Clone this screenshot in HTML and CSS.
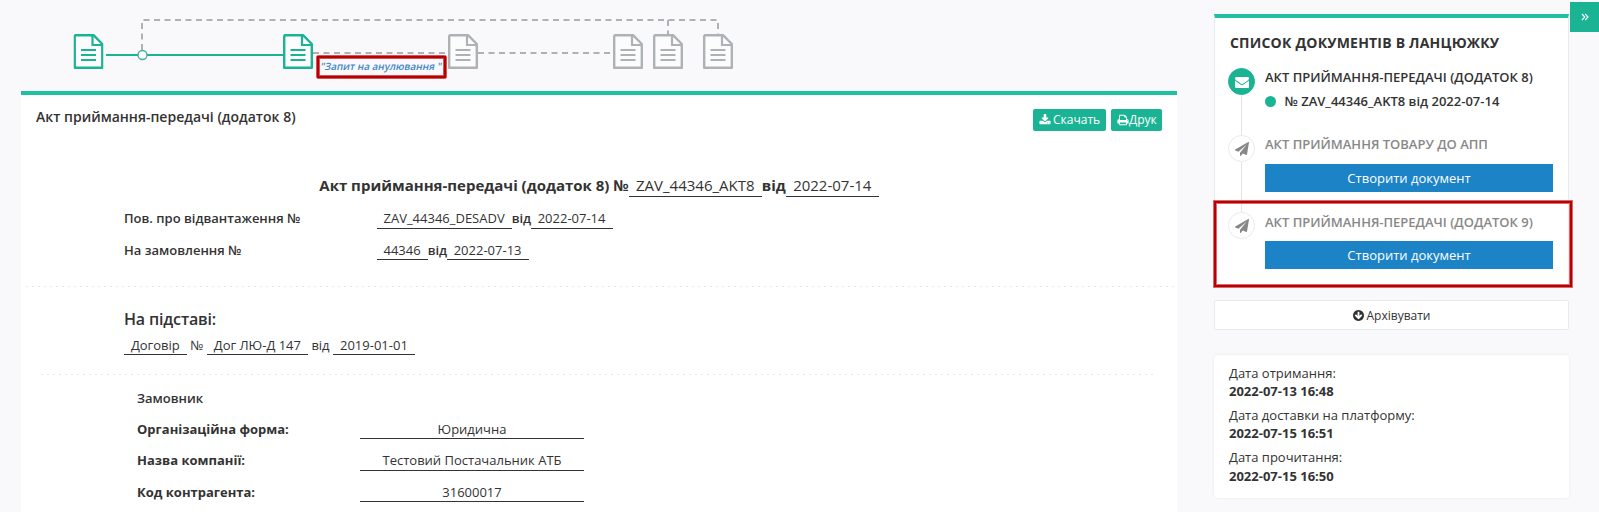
FILE: index.html
```html
<!DOCTYPE html>
<html lang="uk">
<head>
<meta charset="utf-8">
<title>Акт приймання-передачі</title>
<link rel="stylesheet" href="styles.css">
</head>
<body>
<svg width="0" height="0" class="defs">
  <symbol id="file" viewBox="0 0 30 35">
    <path d="M2 1.200H20L28.800 10V33.800H1.200V2Z" fill="#fff" fill-opacity=".55" stroke="currentColor" stroke-width="2.400" stroke-linejoin="round"/>
    <path d="M19 1V11H29" fill="none" stroke="currentColor" stroke-width="2.200"/>
    <path d="M7.500 16H22.500M7.500 21H22.500M7.500 26H22.500" stroke="currentColor" stroke-width="2"/>
  </symbol>
  <symbol id="plane" viewBox="0 0 1792 1792"><path fill="currentColor" d="M1764 11q33 24 27 64l-256 1536q-5 29-32 45-14 8-31 8-11 0-24-5l-453-185-242 295q-18 23-49 23-13 0-22-4-19-7-30.500-23.500t-11.500-36.500v-349l864-1059-1069 925-395-162q-37-14-40-55-2-40 32-59l1664-960q15-9 32-9 20 0 36 11z"/></symbol>
</svg>
<div class="app">
  <main class="main">
    <div class="chain">
      <svg class="chain-map" width="1156" height="91" viewBox="21 0 1156 91">
        <g fill="none" stroke="#aeb2b4" stroke-width="2" stroke-dasharray="6 4.500">
          <path d="M142 50V20H718V34"/>
          <path d="M668 20V34"/>
          <path d="M313 53H448M478 53H613"/>
        </g>
        <path d="M106 55H283" stroke="#1ab394" stroke-width="2"/>
        <circle cx="142.500" cy="55" r="4.500" fill="#fff" stroke="#3fae94" stroke-width="1.300"/>
        <g class="done">
          <use href="#file" x="73.500" y="34" width="30" height="35"/>
          <use href="#file" x="283" y="34" width="30" height="35"/>
        </g>
        <g class="pending">
          <use href="#file" x="448" y="34" width="30" height="35"/>
          <use href="#file" x="613" y="34" width="30" height="35"/>
          <use href="#file" x="653" y="34" width="30" height="35"/>
          <use href="#file" x="703" y="34" width="30" height="35"/>
        </g>
        <text class="chain-label" transform="translate(320 70) skewX(-12)" textLength="121" lengthAdjust="spacingAndGlyphs">"Запит на анулювання "</text>
        <rect x="318" y="57" width="127" height="20" rx="1" fill="none" stroke="#d9696f" stroke-width="4"/>
        <rect x="318" y="57" width="127" height="20" fill="none" stroke="#b80000" stroke-width="2.400"/>
      </svg>
    </div>
    <section class="panel">
      <header class="panel-head">
        <h1>Акт приймання-передачі (додаток 8)</h1>
        <div class="actions">
          <a class="btn btn-load"><svg width="12" height="12" viewBox="0 0 1792 1792"><path fill="currentColor" d="M1344 1344q0-26-19-45t-45-19-45 19-19 45 19 45 45 19 45-19 19-45zm256 0q0-26-19-45t-45-19-45 19-19 45 19 45 45 19 45-19 19-45zm128-224v320q0 40-28 68t-68 28h-1472q-40 0-68-28t-28-68v-320q0-40 28-68t68-28h465l135 136q58 56 136 56t136-56l136-136h464q40 0 68 28t28 68zm-325-569q17 41-14 70l-448 448q-18 19-45 19t-45-19l-448-448q-31-29-14-70 17-39 59-39h256v-448q0-26 19-45t45-19h256q26 0 45 19t19 45v448h256q42 0 59 39z"/></svg>Скачать</a>
          <a class="btn btn-print"><svg width="12" height="12" viewBox="0 0 1792 1792"><path fill="currentColor" d="M448 1536h896v-256h-896v256zm0-640h896v-384h-160q-40 0-68-28t-28-68v-160h-640v640zm1152 64q0-26-19-45t-45-19-45 19-19 45 19 45 45 19 45-19 19-45zm128 0v416q0 13-9.500 22.500t-22.500 9.500h-224v160q0 40-28 68t-68 28h-960q-40 0-68-28t-28-68v-160h-224q-13 0-22.500-9.500t-9.500-22.500v-416q0-79 56.500-135.500t135.500-56.500h64v-544q0-40 28-68t68-28h672q40 0 88 20t76 48l152 152q28 28 48 76t20 88v256h64q79 0 135.500 56.500t56.500 135.500z"/></svg>Друк</a>
        </div>
      </header>
      <h2 class="doc-title">Акт приймання-передачі (додаток 8) №<span class="val">ZAV_44346_AKT8</span>від<span class="val">2022-07-14</span></h2>
      <div class="ref-row"><b>Пов. про відвантаження №</b><span class="val">ZAV_44346_DESADV</span><b>від</b><span class="val">2022-07-14</span></div>
      <div class="ref-row second"><b>На замовлення №</b><span class="val">44346</span><b>від</b><span class="val">2022-07-13</span></div>
      <div class="rule"></div>
      <h3 class="basis">На підставі:</h3>
      <div class="basis-row"><span class="val">Договір</span><span>№</span><span class="val">Дог ЛЮ-Д 147</span><span>від</span><span class="val">2019-01-01</span></div>
      <div class="rule inner"></div>
      <div class="party">
        <div class="party-title">Замовник</div>
        <div class="field"><b>Організаційна форма:</b><span>Юридична</span></div>
        <div class="field tall"><b>Назва компанії:</b><span>Тестовий Постачальник АТБ</span></div>
        <div class="field"><b>Код контрагента:</b><span>31600017</span></div>
      </div>
    </section>
  </main>
  <aside class="side">
    <section class="docs">
      <h2>СПИСОК ДОКУМЕНТІВ В ЛАНЦЮЖКУ</h2>
      <div class="step first">
        <span class="dot on"><svg width="14" height="14" viewBox="0 0 1792 1792"><path fill="currentColor" d="M1792 710v794q0 66-47 113t-113 47h-1472q-66 0-113-47t-47-113v-794q44 49 101 87 362 246 497 345 57 42 92.500 65.500t94.500 48 110 24.500h2q51 0 110-24.500t94.500-48 92.500-65.500q170-123 498-345 57-39 100-87zm0-294q0 79-49 151t-122 123q-376 261-468 325-10 7-42.500 31t-54 38.500-52 32.500-57.500 27-50 9h-2q-23 0-50-9t-57.500-27-52-32.500-54-38.500-42.500-31q-91-64-262-182.500t-205-142.500q-62-42-117-115.500t-55-136.500q0-78 41.500-130t118.500-52h1472q65 0 112.500 47t47.500 113z"/></svg></span>
        <div class="step-body">
          <h4>АКТ ПРИЙМАННЯ-ПЕРЕДАЧІ (ДОДАТОК 8)</h4>
          <p><i class="status"></i>№ ZAV_44346_AKT8 від 2022-07-14</p>
        </div>
      </div>
      <div class="step second">
        <span class="dot"><svg width="14" height="14"><use href="#plane"/></svg></span>
        <div class="step-body muted">
          <h4>АКТ ПРИЙМАННЯ ТОВАРУ ДО АПП</h4>
          <a class="create">Створити документ</a>
        </div>
      </div>
      <div class="step last">
        <span class="dot"><svg width="14" height="14"><use href="#plane"/></svg></span>
        <div class="step-body muted">
          <h4>АКТ ПРИЙМАННЯ-ПЕРЕДАЧІ (ДОДАТОК 9)</h4>
          <a class="create">Створити документ</a>
        </div>
        <span class="marker"></span>
      </div>
    </section>
    <a class="archive"><svg width="11" height="11" viewBox="128 128 1536 1536"><path fill="currentColor" d="M1412 899q0-27-18-45l-91-91q-18-18-45-18t-45 18l-189 189v-502q0-26-19-45t-45-19h-128q-26 0-45 19t-19 45v502l-189-189q-19-19-45-19t-45 19l-91 91q-18 18-18 45t18 45l362 362 91 91q18 18 45 18t45-18l91-91 362-362q18-18 18-45zm252-3q0 209-103 385.500t-279.500 279.500-385.500 103-385.500-103-279.500-279.500-103-385.500 103-385.500 279.500-279.500 385.500-103 385.500 103 279.500 279.500 103 385.500z"/></svg>Архівувати</a>
    <section class="dates">
      <p>Дата отримання:<b>2022-07-13 16:48</b></p>
      <p>Дата доставки на платформу:<b>2022-07-15 16:51</b></p>
      <p>Дата прочитання:<b>2022-07-15 16:50</b></p>
    </section>
  </aside>
  <a class="toggle"><svg width="8" height="8" viewBox="0 0 8 8"><path d="M1 1L3.800 4L1 7M4.200 1L7 4L4.200 7" fill="none" stroke="currentColor" stroke-width="1.100"/></svg></a>
</div>
</body>
</html>
```
FILE: styles.css
```css
* { box-sizing: border-box; }
body {
  margin: 0;
  background: #f9f9fb;
  color: #333;
  font: 13px/18px "Open Sans", "Noto Sans", sans-serif;
  overflow: hidden;
}
h1, h2, h3, h4, p { margin: 0; }
.defs { display: block; position: absolute; }
.app {
  display: grid;
  grid-template-columns: 1156px 355px 29px;
  column-gap: 0;
  padding-left: 21px;
  height: 512px;
  overflow: hidden;
}
.main { display: flex; flex-direction: column; min-width: 0; }
.chain { height: 91px; }
.chain-map { display: block; }
.done { color: #1ab394; }
.pending { color: #aeb2b4; }
.chain-label { font-size: 10px; font-weight: 600; fill: #3f87c7; }

.panel { height: 440px; background: #fff; border-top: 4px solid #1fc1a4; }
.panel-head { display: flex; justify-content: space-between; padding: 13px 15px 0; height: 76px; }
.panel-head h1 { font-size: 14px; line-height: 18px; font-weight: 600; }
.actions { display: flex; gap: 5px; padding-top: 1px; }
.btn {
  display: flex;
  align-items: center;
  height: 22px;
  border-radius: 2px;
  background: #1ab394;
  color: #fff;
  font-size: 12px;
  padding-left: 6px;
}
.btn-load { width: 73px; gap: 2px; }
.btn-print { width: 51px; }
.val { font-weight: 400; border-bottom: 1px solid #333; padding: 0 7px 0 6.5px; white-space: nowrap; }
.doc-title {
  display: flex;
  justify-content: center;
  font-size: 15px;
  line-height: 20px;
  font-weight: 700;
  height: 38px;
  padding-top: 4px;
}
.doc-title .val { height: 22px; padding: 0 7.300px; }
.ref-row { display: flex; padding-left: 103px; height: 32px; line-height: 18px; }
.ref-row b { font-weight: 600; }
.ref-row b:first-child { width: 253px; }
.ref-row .val { height: 20px; }
.ref-row.second { height: 45px; }
.ref-row.second .val { height: 19px; }
.rule {
  height: 1px;
  margin: 0 3px 0 5px;
  background: repeating-linear-gradient(90deg, #e7e7e7 0 2px, transparent 2px 6px);
}
.rule.inner { margin: 0 20px; }
.basis { font-size: 16px; line-height: 22px; font-weight: 600; padding: 21px 0 0 103px; letter-spacing: -.15px; }
.basis-row { display: flex; gap: 3.500px; padding: 6px 0 0 103px; height: 44px; }
.basis-row .val { height: 19px; padding: 0 6.900px; }
.party { padding: 14px 0 0 116px; }
.party-title { font-weight: 600; height: 31px; }
.field { display: flex; height: 31px; }
.field b { width: 223px; font-weight: 700; }
.field span { width: 224px; height: 19px; text-align: center; border-bottom: 1px solid #333; }
.field.tall { height: 32px; }
.field.tall span { height: 20px; }

.side { margin-left: 37px; width: 355px; padding-top: 14px; }
.docs {
  height: 272px;
  background: #fff;
  border: 1px solid #e7eaec;
  border-top: 4px solid #1fc1a4;
  padding: 0 15px 0 13px;
}
.docs h2 { font-size: 14px; letter-spacing: .2px; line-height: 18px; font-weight: 700; padding: 16px 0 0 2px; height: 50px; }
.step { display: grid; grid-template-columns: 27px 288px; column-gap: 10px; position: relative; }
.step.first { height: 67px; }
.step.second { height: 77px; }
.step.first::after, .step.second::after {
  content: "";
  position: absolute;
  left: 13px;
  top: 27px;
  bottom: 0;
  width: 1px;
  background: #e2e4e6;
}
.dot {
  display: flex;
  align-items: center;
  justify-content: center;
  width: 27px;
  height: 27px;
  border: 1px solid #e7eaec;
  border-radius: 50%;
  background: #fff;
  color: #888;
}
.dot.on { background: #1ab394; border-color: #1ab394; color: #fff; }
.step-body { min-width: 0; }
.step-body h4 { font-size: 13px; font-weight: 600; line-height: 18px; white-space: nowrap; }
.step-body p { display: flex; align-items: center; gap: 8.500px; padding-top: 6px; font-weight: 600; }
.status { width: 11px; height: 11px; border-radius: 50%; background: #1ab394; }
.muted h4 { color: #888; }
.create {
  display: block;
  margin-top: 11px;
  height: 28px;
  line-height: 28px;
  text-align: center;
  color: #fff;
  background: #1c84c6;
}
.last h4 { padding-top: 1px; }
.last .create { margin-top: 10px; }
.marker {
  position: absolute;
  left: -14px;
  top: -11px;
  width: 358px;
  height: 86px;
  border: 2px solid #b80000;
  box-shadow: 0 0 0 1px #d9696f, inset 0 0 0 1px #d9696f;
}
.archive {
  display: flex;
  align-items: center;
  justify-content: center;
  gap: 3px;
  height: 30px;
  margin-top: 14px;
  background: #fff;
  border: 1px solid #e7eaec;
  border-radius: 2px;
  font-size: 12px;
  padding-top: 1px;
}
.dates {
  height: 143px;
  margin-top: 25px;
  padding: 9px 15px;
  background: #fff;
  border-radius: 4px;
  box-shadow: 0 0 3px rgba(0, 0, 0, .07);
}
.dates p { height: 42px; }
.dates b { display: block; }
.dates p:last-child b { padding-top: 1px; }
.toggle {
  display: flex;
  align-items: center;
  justify-content: center;
  margin: 2px -38px 0 38px;
  width: 29px;
  height: 30px;
  background: #1ab394;
  color: #fff;
}
```
